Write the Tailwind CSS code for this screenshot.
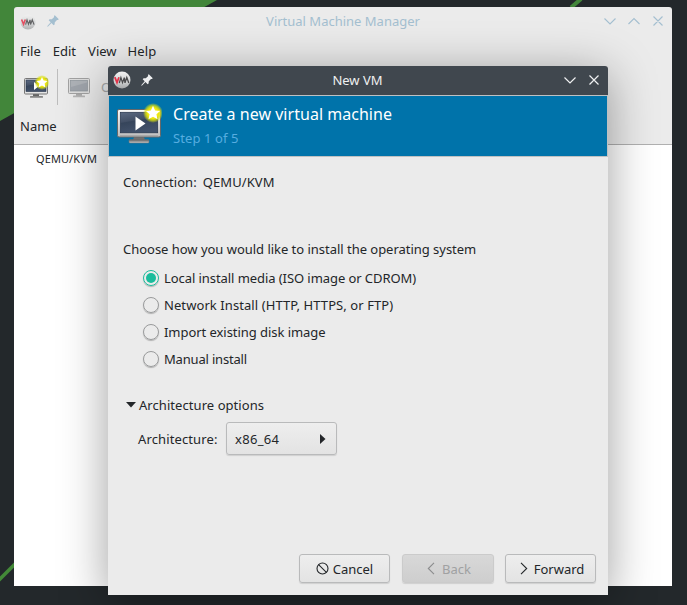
<!DOCTYPE html>
<html lang="en">
<head>
<meta charset="utf-8">
<title>Virtual Machine Manager</title>
<script src="https://cdn.jsdelivr.net/npm/@tailwindcss/browser@4"></script>
</head>
<body class="relative h-[605px] w-[687px] overflow-hidden bg-[#23282b] font-['Noto_Sans',sans-serif] text-[13px] leading-[18px] text-[#232629]">
<svg width="0" height="0" class="absolute">
  <defs>
    <linearGradient id="metal" x1="0" y1="0" x2="0" y2="1"><stop offset="0" stop-color="#fafafa"/><stop offset="1" stop-color="#bdbdbd"/></linearGradient>
    <linearGradient id="stand" x1="0" y1="0" x2="0" y2="1"><stop offset="0" stop-color="#555"/><stop offset="1" stop-color="#ccc"/></linearGradient>
    <linearGradient id="screen" x1="0" y1="0" x2="0.3" y2="1"><stop offset="0" stop-color="#5c6a82"/><stop offset=".45" stop-color="#435066"/><stop offset=".5" stop-color="#36455b"/><stop offset="1" stop-color="#42516a"/></linearGradient>
    <radialGradient id="glow"><stop offset="0" stop-color="#fff46a"/><stop offset=".55" stop-color="#eee60a"/><stop offset=".75" stop-color="#d9e010" stop-opacity=".75"/><stop offset="1" stop-color="#d9e010" stop-opacity="0"/></radialGradient>
    <linearGradient id="ball" x1="0" y1="0" x2="0" y2="1"><stop offset="0" stop-color="#f2f2f2"/><stop offset=".6" stop-color="#cfd1d2"/><stop offset="1" stop-color="#a5a7a9"/></linearGradient>
    <symbol id="vmm" viewBox="0 0 18 18">
      <circle cx="9" cy="9" r="8.500" fill="url(#ball)"/>
      <path d="M1.800 6.200l2.200 5.300 2-5.300" fill="none" stroke="#e2334a" stroke-width="1.800"/>
      <path d="M6.300 12l1.600-5.400 1.600 5 1.800-5 .7 5.400M12 11.700l1.800-5.200 2 5.500" fill="none" stroke="#4b4b4d" stroke-width="1.300"/>
    </symbol>
    <symbol id="pin" viewBox="0 0 12 12">
      <path d="M7.800 .2L11.800 4.200 10.900 5.100 10 4.900 7.800 7.300 7.600 9.400 6.600 10.200 4.500 8.100 .8 11.800.2 11.200 3.700 7.300 1.700 5.300 2.600 4.300 4.800 4.200 7.200 2 6.900 1.100Z" fill="currentColor"/>
    </symbol>
    <symbol id="monitor" viewBox="0 0 46 42">
      <path d="M18 34h10l1 3H17z" fill="#707070"/>
      <rect x="13" y="36.500" width="20" height="3.500" rx="1" fill="url(#stand)" stroke="#777" stroke-width=".5"/>
      <rect x="1.500" y="6.500" width="43" height="27.500" rx="1.500" fill="url(#metal)" stroke="#686868"/>
      <rect x="4.300" y="9.300" width="37.400" height="20.500" fill="url(#screen)" stroke="#26344a" stroke-width=".7"/>
      <path d="M4 33h38" stroke="#929292" stroke-width="1"/>
    </symbol>
    <symbol id="newvm" viewBox="0 0 46 42">
      <use href="#monitor"/>
      <path d="M19.500 13.500v14l10-7z" fill="#fff"/>
      <circle cx="37" cy="10" r="10" fill="url(#glow)"/>
      <path d="M37 2.800l2.100 4.600 5 .5-3.700 3.400 1.100 5-4.500-2.500-4.500 2.500 1.100-5-3.700-3.400 5-.5z" fill="#fff"/>
    </symbol>
    <symbol id="newvmSmall" viewBox="0 0 26 24">
      <path d="M10 19h6v2h-6z" fill="#666"/>
      <rect x="7" y="21" width="13" height="1.800" rx=".6" fill="#858585"/>
      <rect x="1.500" y="3.500" width="23" height="15.500" rx="1" fill="#e4e4e4" stroke="#777"/>
      <rect x="3" y="5" width="20" height="11.500" fill="url(#screen)" stroke="#26344a" stroke-width=".6"/>
      <path d="M11 7v8l5-4z" fill="#fff"/>
      <circle cx="19" cy="7.500" r="7.500" fill="url(#glow)"/>
      <path d="M19 2l1.600 3.500 3.900.4-2.900 2.600.9 3.900-3.500-2-3.500 2 .9-3.900-2.900-2.600 3.900-.4z" fill="#fff"/>
    </symbol>
    <symbol id="openvm" viewBox="0 0 26 24">
      <path d="M10 18h6v3h-6z" fill="#aaa"/>
      <rect x="7" y="20.500" width="12" height="1.800" rx=".6" fill="#b5b5b5"/>
      <rect x="2.500" y="3.500" width="21" height="15" rx="1" fill="#dedede" stroke="#a2a2a2"/>
      <rect x="4.500" y="5.500" width="17" height="10.500" fill="#9fa4ab" stroke="#8e949b" stroke-width=".7"/>
      <path d="M5 6h16v1.500L5 12z" fill="#aeb2b7"/>
    </symbol>
  </defs>
</svg>
<svg class="absolute inset-0" width="687" height="605" viewBox="0 0 687 605">
  <path d="M0 0H217L0 121Z" fill="#42863a"/>
  <path d="M571 7.500L581 -1" stroke="#42863a" stroke-width="4"/>
  <path d="M-2 581L16 563" stroke="#438a38" stroke-width="3.500"/>
</svg>

<section class="absolute top-[7px] left-[14px] flex h-[579px] w-[658px] flex-col overflow-hidden rounded-t-[3px] bg-[#ebebeb]">
  <header class="flex h-[30px] shrink-0 items-center pl-[6px] pr-[8px] pb-[2px] text-[#a4bfd0]">
    <svg class="mt-[2px] size-4 opacity-85"><use href="#vmm"/></svg>
    <svg class="ml-[11px] size-3"><use href="#pin"/></svg>
    <h1 class="flex-1 pl-[25px] text-center">Virtual Machine Manager</h1>
    <svg width="62" height="14" viewBox="0 0 62 14" fill="none" stroke="currentColor" stroke-width="1.100"><path d="M2.500 4.500l5.500 5.500 5.500-5.500M26.500 10l5.500-5.500L37.500 10M51.500 2.500l9 9M60.500 2.500l-9 9"/></svg>
  </header>
  <nav class="flex h-[28px] shrink-0 items-center gap-[12px] pl-[6px]"><span>File</span><span>Edit</span><span>View</span><span class="-ml-px tracking-[0.1px]">Help</span></nav>
  <div class="flex h-[44px] shrink-0 items-center pl-[9px]">
    <svg class="h-[24px] w-[26px]"><use href="#newvmSmall"/></svg>
    <i class="ml-[8px] h-9 w-px bg-[#bdbdbd]"></i>
    <svg class="ml-[8px] h-[24px] w-[26px]"><use href="#openvm"/></svg>
    <span class="ml-[9px] text-[#a6a7a8]">Open</span>
  </div>
  <div class="flex h-[36px] shrink-0 items-center border-b border-[#b0b0b0] pb-[2px] pl-[6px]">Name</div>
  <div class="flex-1 bg-white pt-[5px] pl-[22px] text-[11px] tracking-[0.1px]">QEMU/KVM</div>
</section>

<section class="absolute top-[66px] left-[108px] flex h-[529px] w-[500px] flex-col rounded-t-[3px] bg-[#ebebeb] shadow-[0_8px_48px_rgba(0,0,0,0.38)]">
  <header class="flex h-[29px] shrink-0 items-center rounded-t-[3px] bg-[#40474e] pb-[2px] pl-[5px] pr-[8px] text-[#eff0f1]">
    <svg class="size-[18px]"><use href="#vmm"/></svg>
    <svg class="ml-[10px] size-3"><use href="#pin"/></svg>
    <h2 class="flex-1 text-center">New VM</h2>
    <svg width="38" height="14" viewBox="0 0 38 14" fill="none" stroke="currentColor" stroke-width="1.200"><path d="M2.500 4.500L8 10l5.500-5.500M27.500 2.500l9 9M36.500 2.500l-9 9"/></svg>
  </header>
  <div class="flex h-[62px] shrink-0 border border-[#bfc1c2] bg-[#0073aa] pl-[7px]">
    <svg class="mt-[7px] h-[42px] w-[46px]"><use href="#newvm"/></svg>
    <div class="pl-[11px] pt-[7px]">
      <h3 class="text-[16px] leading-[22px] tracking-[0.03px] text-white">Create a new virtual machine</h3>
      <p class="mt-[4px] tracking-[0.1px] text-[#56ade0]">Step 1 of 5</p>
    </div>
  </div>
  <main class="flex flex-1 flex-col pl-[15px] pt-[16px]">
    <p class="flex gap-[6px]"><span class="tracking-[0.05px]">Connection:</span><span class="tracking-[0.1px]">QEMU/KVM</span></p>
    <p class="mt-[49px] tracking-[-0.025px]">Choose how you would like to install the operating system</p>
    <div class="mt-[6px] flex flex-col pl-[20px]">
      <label class="flex h-[27px] items-center gap-[5px] tracking-[-0.07px]"><i class="grid size-4 place-items-center rounded-full border border-[#1abc9c] shadow-[0_1px_1px_rgba(0,0,0,0.25)]"><b class="size-[10px] rounded-full bg-[#1abc9c]"></b></i>Local install media (ISO image or CDROM)</label>
      <label class="flex h-[27px] items-center gap-[5px] tracking-[0.08px]"><i class="size-4 rounded-full border border-[#999a9b] shadow-[0_1px_1px_rgba(0,0,0,0.25)]"></i>Network Install (HTTP, HTTPS, or FTP)</label>
      <label class="flex h-[27px] items-center gap-[5px] tracking-[-0.05px]"><i class="size-4 rounded-full border border-[#999a9b] shadow-[0_1px_1px_rgba(0,0,0,0.25)]"></i>Import existing disk image</label>
      <label class="flex h-[27px] items-center gap-[5px] tracking-[-0.18px]"><i class="size-4 rounded-full border border-[#999a9b] shadow-[0_1px_1px_rgba(0,0,0,0.25)]"></i>Manual install</label>
    </div>
    <div class="mt-[24px] flex items-center gap-[3px] pl-[3px] tracking-[0.06px]"><svg width="10" height="6" viewBox="0 0 10 6"><path d="M0 0h10L5 5.500z" fill="#232629"/></svg>Architecture options</div>
    <div class="mt-[8px] flex items-center gap-[9px] pl-[15px]"><span class="w-[79px] tracking-[0.12px]">Architecture:</span>
      <div class="flex h-[33px] w-[111px] items-center justify-between rounded-[3px] border border-[#b9babb] bg-linear-to-b from-[#eeeeee] to-[#e3e3e3] pl-[8px] pr-[10px] shadow-[0_1px_1px_rgba(0,0,0,0.12)]"><span class="tracking-[0.3px]">x86_64</span><svg width="6" height="10" viewBox="0 0 6 10"><path d="M0 0v10L5.500 5z" fill="#232629"/></svg></div>
    </div>
  </main>
  <footer class="flex justify-end pr-[12px] pb-[12px]">
    <button class="mr-[12px] flex h-[29px] w-[91px] items-center justify-center gap-[4px] rounded-[3px] border border-[#b9babb] bg-linear-to-b from-[#eeeeee] to-[#e3e3e3] shadow-[0_1px_1px_rgba(0,0,0,0.12)]"><svg width="13" height="13" viewBox="0 0 13 13" fill="none" stroke="#232629" stroke-width="1.100"><circle cx="6.500" cy="6.500" r="5.500"/><path d="M2.600 2.600l7.800 7.800"/></svg>Cancel</button>
    <button class="mr-[11px] flex h-[29px] w-[92px] items-center justify-center gap-[7px] rounded-[3px] border border-[#cbcbcb] bg-linear-to-b from-[#d8d8d8] to-[#cecece] pl-[2px] text-[#a0a1a2] shadow-[0_1px_1px_rgba(0,0,0,0.12)]"><svg width="8" height="13" viewBox="0 0 8 13" fill="none" stroke="#8b8c8d" stroke-width="1.100"><path d="M7 .8L1.300 6.500 7 12.200"/></svg>Back</button>
    <button class="flex h-[29px] w-[91px] items-center justify-center gap-[6px] rounded-[3px] border border-[#b9babb] bg-linear-to-b from-[#eeeeee] to-[#e3e3e3] pl-[3px] shadow-[0_1px_1px_rgba(0,0,0,0.12)]"><svg width="8" height="13" viewBox="0 0 8 13" fill="none" stroke="#232629" stroke-width="1.100"><path d="M1 .8L6.700 6.500 1 12.200"/></svg>Forward</button>
  </footer>
</section>
</body>
</html>
